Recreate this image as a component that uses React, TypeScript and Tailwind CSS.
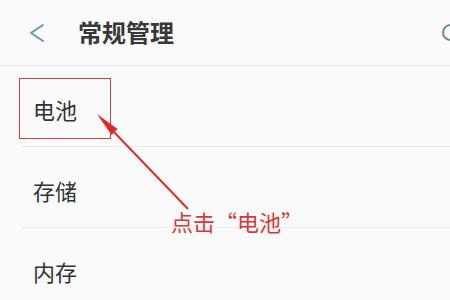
const ITEMS = ['电池', '存储', '内存']

function BackIcon() {
  return (
    <svg width="16" height="20" viewBox="0 0 16 20" className="ml-[29px]">
      <polyline points="14,2 2,10 14,18" fill="none" stroke="#5e9eaa" strokeWidth="2" strokeLinecap="round" strokeLinejoin="round" />
    </svg>
  )
}

export default function App() {
  return (
    <div
      className="relative w-[450px] h-[300px] overflow-hidden bg-[#fafafa] text-[#333]"
      style={{ fontFamily: '"Noto Sans CJK SC", "Noto Sans", sans-serif' }}
    >
      {/* Header */}
      <div className="flex items-center h-[66px] border-b border-[#e6e6e6]">
        <BackIcon />
        <h1 className="ml-[33px] text-[24px] font-bold leading-none text-[#383838] pb-[2px]">常规管理</h1>
        <div className="ml-auto mr-[-9px] w-[17px] h-[17px] rounded-full border-2 border-[#6f8e98]" />
      </div>

      {/* List */}
      <div>
        {ITEMS.map((label) => (
          <div key={label} className="ml-[22px] h-[81px] flex items-center border-b border-[#ececec]">
            <span className="ml-[11px] text-[22px] leading-none pt-[6px]">{label}</span>
          </div>
        ))}
      </div>

      {/* Annotation */}
      <div className="absolute left-[19px] top-[78px] w-[92px] h-[61px] border-[1.5px] border-[#c94444]" />
      <svg className="absolute inset-0 pointer-events-none" width="450" height="300" viewBox="0 0 450 300">
        <line x1="188" y1="209" x2="113" y2="131" stroke="#e02a2a" strokeWidth="2" />
        <polygon points="97,114 117.5,129 111.5,135" fill="#e02a2a" />
      </svg>
      <span className="absolute left-[171px] top-[210px] text-[22px] leading-none text-[#d8383a]">
        点击“电池”
      </span>
    </div>
  )
}
